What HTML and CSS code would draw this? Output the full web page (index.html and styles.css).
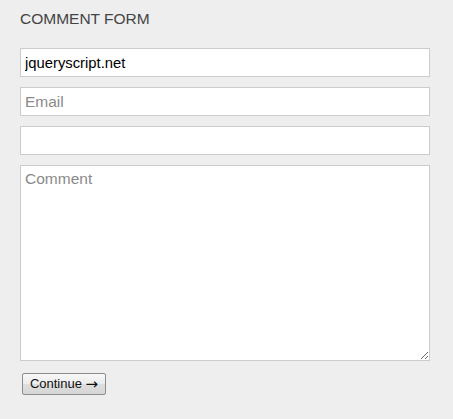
FILE: index.html
```html
<!DOCTYPE html>
<html>
<head>
<meta charset="utf-8">
<link rel="stylesheet" href="styles.css">
</head>
<body>
<div class="wrap">
  <h2 class="title">COMMENT FORM</h2>
  <form class="form">
    <input class="field" type="text" value="jqueryscript.net">
    <input class="field" type="text" placeholder="Email">
    <input class="field" type="text">
    <textarea class="field area" placeholder="Comment"></textarea>
    <button class="btn" type="button">Continue <span class="arrow">→</span></button>
  </form>
</div>
</body>
</html>
```

FILE: styles.css
```css
html, body {
  margin: 0;
  padding: 0;
  background: #eeeeee;
  font-family: "Liberation Sans", Arial, sans-serif;
}
.wrap {
  padding: 9px 23px 0 20px;
}
.title {
  margin: 0 0 19px;
  font-size: 15.5px;
  line-height: 20px;
  font-weight: normal;
  color: #444444;
}
.form {
  display: flex;
  flex-direction: column;
  align-items: flex-start;
  margin: 0;
}
.field {
  box-sizing: border-box;
  width: 410px;
  height: 29px;
  margin: 0 0 10px;
  padding: 0 4px;
  border: 1px solid #cccccc;
  border-radius: 0;
  background: #ffffff;
  font-family: "Liberation Sans", Arial, sans-serif;
  font-size: 14.8px;
  color: #000000;
  outline: none;
}
.field::placeholder {
  font-size: 15.5px;
  color: #8a8a8a;
}
.area {
  height: 196px;
  margin-bottom: 12px;
  padding: 4px 4px;
  line-height: 18px;
  resize: both;
}
.btn {
  box-sizing: border-box;
  height: 22px;
  width: 84px;
  margin-left: 2px;
  padding: 0 4px;
  border: 1px solid #8c8c8c;
  border-radius: 2px;
  background: linear-gradient(#f7f7f7 0%, #ececec 50%, #dedede 51%, #d6d6d6 100%);
  font-family: "Liberation Sans", Arial, sans-serif;
  font-size: 13px;
  line-height: 16px;
  color: #111111;
  white-space: nowrap;
}
.arrow {
  font-family: "DejaVu Sans", sans-serif;
  font-size: 15px;
  line-height: 1;
  vertical-align: -1px;
}
```
